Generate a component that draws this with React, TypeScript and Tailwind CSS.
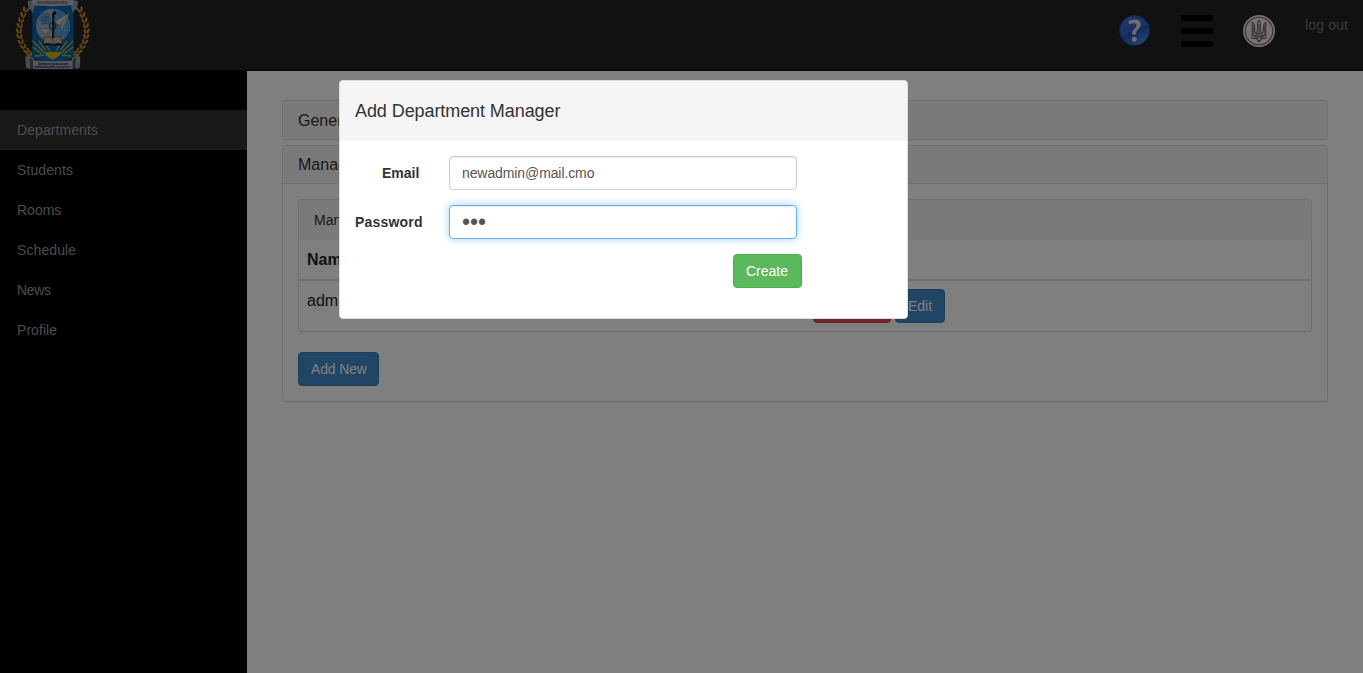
import React from 'react';

const NAV_ITEMS: [string, string][] = [
  ['Departments', 'tracking-[0.08px]'],
  ['Students', 'tracking-[0.1px]'],
  ['Rooms', ''],
  ['Schedule', 'tracking-[0.1px]'],
  ['News', 'tracking-[-0.3px]'],
  ['Profile', 'tracking-[0.05px]'],
];

const LEAVES: [number, number, number][] = [
  [75, 30, 25], [68, 46, 15], [62, 62, 10], [58, 78, 4], [56, 94, -2],
  [58, 110, -10], [62, 126, -18], [70, 141, -28], [80, 154, -38], [89, 163, -48],
];

function Branch() {
  return (
    <g>
      <path d="M88 22Q34 95 96 170" fill="none" stroke="#8c6118" strokeWidth="3" />
      {LEAVES.map(([x, y, a]) => (
        <g key={y} transform={`translate(${x} ${y}) rotate(${a})`} fill="#bd8528">
          <ellipse cx="-3" cy="-3" rx="3.5" ry="8" transform="rotate(-24)" />
          <ellipse cx="5" cy="-2" rx="3.4" ry="8" transform="rotate(28)" />
          <path d="M-5 -8l3 9" stroke="#e3a33c" strokeWidth="2" />
        </g>
      ))}
    </g>
  );
}

function Emblem() {
  return (
    <svg width="110" height="70" viewBox="0 0 330 210" className="block">
      <Branch />
      <g transform="translate(317 0) scale(-1 1)"><Branch /></g>
      <path d="M97 14H221V169Q219 176 207 178Q178 181 158 192Q138 181 109 178Q99 176 97 169Z" fill="#0864ad" />
      <path d="M82 3L104 0V19L98 40L91 27L79 34L86 22Z" fill="#8f9ab8" />
      <path d="M235 3L213 0V19L219 40L226 27L238 34L231 22Z" fill="#8f9ab8" />
      <path d="M97 0H220V16Q158 21 97 16Z" fill="#b8b8c6" />
      <text x="158" y="12" textAnchor="middle" fontSize="10" fontWeight="bold" textLength="92" lengthAdjust="spacingAndGlyphs" fill="#4a3820" className="font-['Liberation_Serif']">DOCENDO DISCIMUS</text>
      <circle cx="159" cy="77" r="51" fill="#9cabc5" />
      <path d="M159 27a50 50 0 0 1 38 83h-38z" fill="#5797c8" />
      <path d="M165 42Q186 66 171 113M190 42Q205 82 185 116M168 52Q184 64 207 63M168 97Q185 87 209 92" fill="none" stroke="#87b5d5" strokeWidth="2" />
      <g fill="none" stroke="#4386b5" strokeWidth="3.5">
        <ellipse cx="136" cy="56" rx="17" ry="7" />
        <ellipse cx="136" cy="56" rx="17" ry="7" transform="rotate(60 136 56)" />
        <ellipse cx="136" cy="56" rx="17" ry="7" transform="rotate(120 136 56)" />
      </g>
      <circle cx="136" cy="56" r="4" fill="#327bb6" />
      <path d="M119 86H151A18 18 0 0 1 134 104Z" fill="#c8c8cc" stroke="#777b86" strokeWidth="2.5" />
      <path d="M151 86L132 106" fill="none" stroke="#858c9a" strokeWidth="3" />
      <path d="M208 40L163 67L179 73L185 87Z" fill="#d5ceb5" />
      <path d="M208 40L179 73L181 83Z" fill="#a39b82" />
      <path d="M157 38H163L162 132H156Z" fill="#111a25" />
      <circle cx="164" cy="39" r="5" fill="#151515" />
      <circle cx="158" cy="77" r="10" fill="none" stroke="#182638" strokeWidth="3" />
      <path d="M133 112Q148 106 158 115Q170 106 184 112L187 132Q171 127 159 133Q147 127 129 132Z" fill="#b8b09e" stroke="#48352c" strokeWidth="2" />
      <path d="M129 132Q146 128 159 135Q172 128 187 132V137Q172 132 159 138Q147 132 129 137Z" fill="#291f26" />
      <path d="M158 112V135" stroke="#685544" strokeWidth="2" />
      <path d="M130 157Q158 153 188 157L174 170L158 180L143 170Z" fill="#d0b409" />
      <g stroke="#b6ad31" strokeWidth="4">
        <path d="M131 156L98 122M126 162L98 141M132 166L105 168M137 151L117 123M149 151L140 138M187 156L220 122M191 162L220 141M186 166L213 168M181 151L201 123M169 151L178 138" />
      </g>
      <path d="M76 170Q89 165 101 174V201Q91 209 78 203Z" fill="#9799a5" />
      <path d="M241 170Q228 165 216 174V201Q226 209 239 203Z" fill="#9799a5" />
      <path d="M89 172L103 184V203L91 205Z" fill="#505668" />
      <path d="M228 172L214 184V203L226 205Z" fill="#505668" />
      <path d="M99 181Q158 186 218 181V207H99Z" fill="#a4acbe" />
      <g fontSize="10" fontWeight="bold" textAnchor="middle" fill="#252936" className="font-['Liberation_Serif']">
        <text x="158" y="194" textLength="90" lengthAdjust="spacingAndGlyphs">Дніпропетровський</text>
        <text x="158" y="205" textLength="111" lengthAdjust="spacingAndGlyphs">національний університет</text>
      </g>
    </svg>
  );
}

function HelpIcon() {
  return (
    <svg width="32" height="32" viewBox="0 0 32 32" className="block">
      <defs>
        <linearGradient id="help" x1="0.2" y1="0" x2="0.75" y2="1">
          <stop offset="0" stopColor="#3f69cf" />
          <stop offset="0.55" stopColor="#2453bd" />
          <stop offset="1" stopColor="#4798e4" />
        </linearGradient>
      </defs>
      <circle cx="15.5" cy="15.5" r="15" fill="url(#help)" stroke="#254aa5" strokeWidth="0.8" />
      <path d="M2 12Q7 1 16 1.5Q25 2 29.5 10Q15 11 5 23Q1 18 2 12Z" fill="#709bed" opacity="0.18" />
      <path d="M9.2 6.2Q12.1 4.4 15.7 4.5C20.4 4.6 22.1 7.2 21.7 10.3C21.3 14 16.7 14.7 16.9 19.5H13.2C12.4 14.4 17.7 13.4 17.5 10C17.3 7.8 14.2 7.9 10.6 9.5Z" fill="#ddd" />
      <circle cx="15.3" cy="24.2" r="2.5" fill="#ddd" />
    </svg>
  );
}

function TridentIcon() {
  return (
    <svg width="32" height="32" viewBox="0 0 32 32" className="block">
      <circle cx="16" cy="16" r="16" fill="#e9e4e5" />
      <circle cx="16" cy="16" r="13.8" fill="none" stroke="#7c6b6d" strokeWidth="1.1" />
      <g fill="none" stroke="#705457" strokeWidth="1" strokeLinejoin="round">
        <path d="M16 5L14.5 9Q15.6 14 13.6 18.5Q11.2 18 11.6 15.5Q12.3 9.2 9.2 7V23.5H13.8Q14.4 26 16 27.5Q17.6 26 18.2 23.5H22.8V7Q19.7 9.2 20.4 15.5Q20.8 18 18.4 18.5Q16.4 14 17.5 9Z" />
        <path d="M10.8 10V21H14M21.2 10V21H18M16 9V22M12 23Q12 18.5 16 18.5Q20 18.5 20 23M14 19.5V24L16 26L18 24V19.5M14 22H18" />
      </g>
    </svg>
  );
}

function Header() {
  return (
    <header className="flex h-[71px] items-start justify-between border-b border-[#080808] bg-[#222]">
      <Emblem />
      <div className="flex pr-[14px] text-sm leading-5 text-[#777]">
        <div className="mr-[30px] mt-[15px]"><HelpIcon /></div>
        <div className="mr-[30px] mt-[15px] flex h-8 w-8 flex-col justify-between">
          <span className="h-1.5 rounded-[2px] bg-black" />
          <span className="h-1.5 rounded-[2px] bg-black" />
          <span className="h-1.5 rounded-[2px] bg-black" />
        </div>
        <div className="mr-[30px] mt-[15px]"><TridentIcon /></div>
        <a className="mt-[15px] w-11 whitespace-nowrap tracking-[0.15px]">log out</a>
      </div>
    </header>
  );
}

function Sidebar() {
  return (
    <nav className="w-[247px] shrink-0 bg-black pt-[39px] text-sm text-[#999]">
      {NAV_ITEMS.map(([item, spacing], i) => (
        <a key={item} className={`flex h-10 items-center pl-[17px] ${spacing} ${i === 0 ? 'bg-[#333]' : ''}`}>{item}</a>
      ))}
    </nav>
  );
}

const PANEL = 'rounded border border-[#ddd] bg-white shadow-[0_1px_1px_rgba(0,0,0,0.05)]';
const BUTTON = 'h-[34px] rounded border px-3 text-sm leading-5 text-white';

function Content() {
  return (
    <main className="flex-1 bg-white pl-[35px] pr-[35px] pt-[29px]">
      <section className={`${PANEL} h-10`}>
        <h4 className="h-full rounded-[3px] bg-[#f5f5f5] px-[15px] pt-[11px] text-base leading-[18px]">General</h4>
      </section>
      <section className={`${PANEL} mt-[5px] h-[257px]`}>
        <h4 className="h-[38px] rounded-t-[3px] border-b border-[#ddd] bg-[#f5f5f5] px-[15px] pt-[10px] text-base leading-[18px]">Managers</h4>
        <div className="p-[15px]">
          <div className={`${PANEL} h-[133px]`}>
            <div className="h-10 rounded-t-[3px] bg-[#f5f5f5] px-[15px] py-[10px] text-sm leading-5">Managers</div>
            <table className="w-full table-fixed border-separate border-spacing-0 text-left text-base leading-[22px] text-[#222]">
              <thead>
                <tr className="h-[41px]">
                  <th className="w-[506px] border-b-2 border-[#ddd] px-2 py-0 align-middle">Name</th>
                  <th className="border-b-2 border-[#ddd]" />
                </tr>
              </thead>
              <tbody>
                <tr className="h-[50px]">
                  <td className="px-2 pt-[9px] align-top">admin@mail.com</td>
                  <td className="p-2 align-top">
                    <div className="flex gap-1">
                      <button className={`${BUTTON} w-[78px] border-[#d43f3a] bg-[#d9534f]`}>Remove</button>
                      <button className={`${BUTTON} w-[50px] border-[#357ebd] bg-[#428bca]`}>Edit</button>
                    </div>
                  </td>
                </tr>
              </tbody>
            </table>
          </div>
          <button className={`${BUTTON} mt-5 w-[81px] whitespace-nowrap border-[#357ebd] bg-[#428bca] text-left tracking-[-0.15px]`}>Add New</button>
        </div>
      </section>
    </main>
  );
}

const INPUT = 'h-[34px] w-[348px] rounded border bg-white px-3 leading-5 text-[#555] outline-none';

function ManagerDialog() {
  return (
    <div className="absolute left-[339px] top-20 h-[239px] w-[569px] rounded border border-[#ddd] bg-white">
      <h3 className="h-[60px] rounded-t-[3px] bg-[#f5f5f5] px-[15px] pt-5 text-lg leading-5 tracking-[-0.08px]">Add Department Manager</h3>
      <form className="pl-[15px] pt-[15px] text-sm">
        <div className="flex h-[34px] items-center">
          <label className="w-[94px] pl-[27px] font-bold">Email</label>
          <input defaultValue="newadmin@mail.cmo" className={`${INPUT} border-[#ccc] text-sm tracking-[-0.1px] shadow-[inset_0_1px_1px_rgba(0,0,0,0.075)]`} />
        </div>
        <div className="mt-[15px] flex h-[34px] items-center">
          <label className="w-[94px] font-bold tracking-[0.2px]">Password</label>
          <input type="password" defaultValue="123" className={`${INPUT} border-[#66afe9] text-[23px] shadow-[inset_0_1px_1px_rgba(0,0,0,0.075),0_0_8px_rgba(102,175,233,0.6)]`} />
        </div>
        <button type="button" className={`${BUTTON} ml-[378px] mt-[15px] w-[69px] border-[#4cae4c] bg-[#5cb85c] text-left`}>Create</button>
      </form>
    </div>
  );
}

export default function App() {
  return (
    <div className="relative flex h-[673px] w-[1363px] flex-col overflow-hidden bg-white font-['Liberation_Sans',Arial,sans-serif] text-[#333]">
      <Header />
      <div className="flex flex-1">
        <Sidebar />
        <Content />
      </div>
      <div className="absolute inset-0 bg-black/50" />
      <ManagerDialog />
    </div>
  );
}
